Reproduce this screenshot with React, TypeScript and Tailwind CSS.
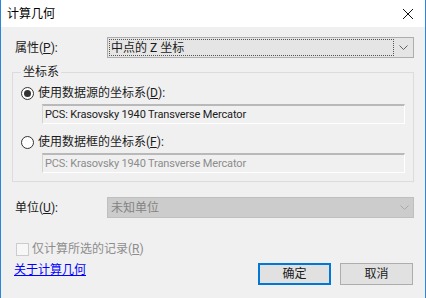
import React from "react";

const font = {
  fontFamily: 'Roboto, "Noto Sans CJK SC", sans-serif',
};

function Chevron({ color = "#606060" }: { color?: string }) {
  return (
    <svg width="9" height="5" viewBox="0 0 9 5" fill="none">
      <path d="M0.5 0.5 L4.5 4.5 L8.5 0.5" stroke={color} strokeWidth="1" />
    </svg>
  );
}

function Radio({ checked }: { checked?: boolean }) {
  return (
    <span className="flex h-[13px] w-[13px] shrink-0 items-center justify-center rounded-full border border-[#333333] bg-white">
      {checked && <span className="h-[7px] w-[7px] rounded-full bg-[#333333]" />}
    </span>
  );
}

function ReadOnlyBox({ text, disabled }: { text: string; disabled?: boolean }) {
  return (
    <div
      className={`ml-[21px] mt-[3px] flex h-[20px] items-center border border-t-2 border-t-[#b9b9b9] border-l-[#d4d4d4] border-r-white border-b-white bg-[#f0f0f0] pl-[2px] text-[11px] tracking-[-0.15px] ${
        disabled ? "text-[#8c8c8c]" : "text-[#1b1b1b]"
      }`}
    >
      {text}
    </div>
  );
}

export default function App() {
  return (
    <div
      className="flex h-[298px] w-[426px] flex-col overflow-hidden border-x border-[#2a86dc] bg-[#f0f0f0] text-[12px] leading-[16px] text-[#1b1b1b]"
      style={font}
    >
      <div className="flex h-[27px] shrink-0 items-center justify-between bg-white pl-[6px] pr-[12px]">
        <span className="text-[12px] text-black">计算几何</span>
        <svg width="10" height="10" viewBox="0 0 10 10">
          <path d="M0 0 L10 10 M10 0 L0 10" stroke="#111" strokeWidth="1" />
        </svg>
      </div>

      <div className="flex flex-col pl-[11px] pr-[11px]">
        <div className="mt-[10px] flex h-[21px] items-center pl-[3px]">
          <span className="w-[92px] shrink-0">
            属性(<span className="underline">P</span>):
          </span>
          <div className="flex h-[21px] flex-1 items-stretch border border-[#adadad] bg-[#e5e5e5] p-[1px]">
            <div className="flex flex-1 items-center border border-dotted border-[#555555] pl-[1px]">
              中点的 Z 坐标
            </div>
            <div className="flex w-[18px] items-center justify-center">
              <Chevron />
            </div>
          </div>
        </div>

        <fieldset className="mt-[6px] border border-[#dcdcdc] pb-[8px] pl-[8px] pr-[8px]">
          <legend className="px-[2px] leading-[16px]">坐标系</legend>
          <div className="mt-[5px] flex h-[16px] items-center gap-[4px]">
            <Radio checked />
            <span>
              使用数据源的坐标系(<span className="underline">D</span>):
            </span>
          </div>
          <ReadOnlyBox text="PCS: Krasovsky 1940 Transverse Mercator" />
          <div className="mt-[10px] flex h-[16px] items-center gap-[4px]">
            <Radio />
            <span>
              使用数据框的坐标系(<span className="underline">F</span>):
            </span>
          </div>
          <ReadOnlyBox text="PCS: Krasovsky 1940 Transverse Mercator" disabled />
        </fieldset>

        <div className="mt-[15px] flex h-[21px] items-center pl-[3px]">
          <span className="w-[92px] shrink-0">
            单位(<span className="underline">U</span>):
          </span>
          <div className="flex h-[21px] flex-1 items-center border border-[#bfbfbf] bg-[#cccccc] pl-[3px] text-[#838383]">
            <span className="flex-1">未知单位</span>
            <div className="flex w-[18px] items-center justify-center">
              <Chevron color="#a8a8a8" />
            </div>
          </div>
        </div>

        <div className="mt-[23px] flex h-[16px] items-center gap-[3px] pl-[4px] text-[#8d8d8d]">
          <span className="h-[13px] w-[13px] shrink-0 border border-[#cccccc] bg-[#f7f7f7]" />
          <span>
            仅计算所选的记录(<span className="underline">R</span>)
          </span>
        </div>

        <div className="mt-[6px] flex h-[22px] items-start pl-[2px] pr-[1px]">
          <a className="-mt-[1px] flex-1 text-[#0000ff] underline">关于计算几何</a>
          <button className="h-[22px] w-[73px] border-2 border-[#0078d7] bg-[#e1e1e1] text-[12px]">
            确定
          </button>
          <button className="ml-[9px] h-[22px] w-[73px] border border-[#adadad] bg-[#e1e1e1] text-[12px]">
            取消
          </button>
        </div>
      </div>
    </div>
  );
}
